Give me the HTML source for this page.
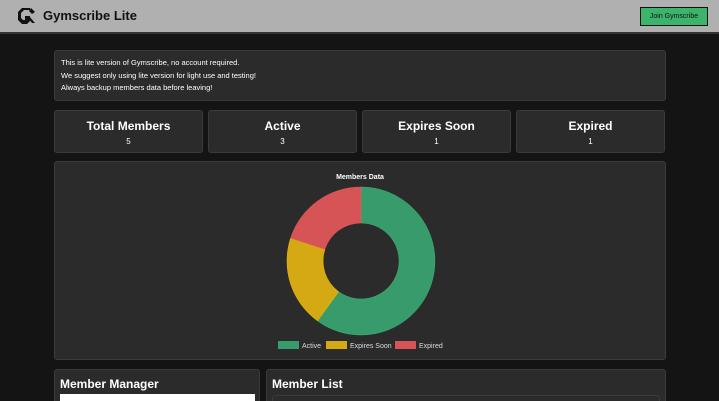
<!DOCTYPE html>
<html style="overflow:hidden;width:719px;height:401px"><head><style>
*{box-sizing:border-box;margin:0;padding:0}
body{width:719px;height:401px;overflow:hidden;background:#141414;font-family:"Liberation Sans",sans-serif;color:#fff;position:relative}
.hdr{position:absolute;left:0;top:0;width:719px;height:34px;background:#b0b0b0;border-bottom:2px solid #333}
.card{position:absolute;background:#2b2b2b;border:1px solid #3b3b3b;border-radius:3px}
.stat{top:110px;height:43px;width:149px;text-align:center}
.stat b{display:block;font-size:12px;margin-top:8px}
.stat span{display:block;font-size:8px;margin-top:4px}
</style></head><body>
<div class="hdr">
<svg style="position:absolute;left:16px;top:6px" width="22" height="20" viewBox="0 0 22 20"><path d="M14 2H6L2 6v8l4 4h5l3-3V10H9v4H7L5 12V7l3-3h6z" fill="#111"/><path d="M13 10l6 7h-3l-4-5z" fill="#111"/><path d="M15 2l4 4-3 2-3-3z" fill="#111"/></svg>
<div style="position:absolute;left:43px;top:8px;font-size:13px;font-weight:bold;color:#111">Gymscribe Lite</div>
<div style="position:absolute;left:640px;top:7px;width:68px;height:19px;background:#3cb46c;border:1px solid #111;font-size:7px;color:#111;text-align:center;line-height:17px">Join Gymscribe</div>
</div>
<div class="card" style="left:54px;top:50px;width:612px;height:51px;font-size:7.5px;line-height:12.5px;padding:6px 0 0 6px">This is lite version of Gymscribe, no account required.<br>We suggest only using lite version for light use and testing!<br>Always backup members data before leaving!</div>
<div class="card stat" style="left:54px"><b>Total Members</b><span>5</span></div>
<div class="card stat" style="left:208px"><b>Active</b><span>3</span></div>
<div class="card stat" style="left:362px"><b>Expires Soon</b><span>1</span></div>
<div class="card stat" style="left:516px"><b>Expired</b><span>1</span></div>
<div class="card" style="left:54px;top:161px;width:612px;height:199px">
<div style="position:absolute;left:0;width:100%;top:12px;text-align:center;font-size:7px;font-weight:bold">Members Data</div>
</div>
<svg style="position:absolute;left:0;top:0" width="719" height="401">
<path d="M361 187A74 74 0 1 1 317.5 320.9L338.7 291.7A38 38 0 1 0 361 223Z" fill="#389b6c" stroke="#3cb474" stroke-width=".5"/>
<path d="M317.5 320.9A74 74 0 0 1 290.6 238.1L324.9 249.3A38 38 0 0 0 338.7 291.7Z" fill="#d4a914" stroke="#f0c000" stroke-width=".5"/>
<path d="M290.6 238.1A74 74 0 0 1 361 187L361 223A38 38 0 0 0 324.9 249.3Z" fill="#d65356" stroke="#ee5a5a" stroke-width=".5"/>
<rect x="278" y="341" width="21" height="8" fill="#389b6c"/><text x="302" y="348" font-size="7" fill="#ddd" font-family="Liberation Sans">Active</text>
<rect x="326" y="341" width="21" height="8" fill="#d4a914"/><text x="350" y="348" font-size="7" fill="#ddd" font-family="Liberation Sans">Expires Soon</text>
<rect x="395" y="341" width="21" height="8" fill="#d65356"/><text x="419" y="348" font-size="7" fill="#ddd" font-family="Liberation Sans">Expired</text>
</svg>
<div class="card" style="left:54px;top:369px;width:206px;height:40px;overflow:hidden"><div style="position:absolute;left:5px;top:7px;font-size:12px;font-weight:bold">Member Manager</div><div style="position:absolute;left:5px;top:24px;width:195px;height:20px;background:#fff"></div></div>
<div class="card" style="left:266px;top:369px;width:400px;height:40px;overflow:hidden"><div style="position:absolute;left:5px;top:7px;font-size:12px;font-weight:bold">Member List</div><div style="position:absolute;left:5px;top:25px;width:388px;height:20px;border:1px solid #3b3b3b;border-radius:3px"></div></div>
</body></html>
